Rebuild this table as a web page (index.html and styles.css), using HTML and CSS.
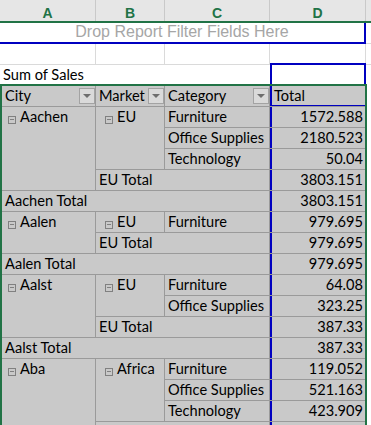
FILE: index.html
```html
<!DOCTYPE html>
<html>
<head>
<meta charset="utf-8">
<link rel="stylesheet" href="styles.css">
</head>
<body>
<div class="sheet">
  <div class="colhdr">
    <div class="ch">A</div>
    <div class="ch">B</div>
    <div class="ch">C</div>
    <div class="ch">D</div>
    <div class="ch ch-e"></div>
  </div>

  <div class="filter-row">
    <div class="filter-box">Drop Report Filter Fields Here</div>
    <div class="filter-rest"></div>
  </div>

  <div class="wrow">
    <div class="wc"></div><div class="wc"></div><div class="wc"></div><div class="wc"></div><div class="wc wc-e"></div>
  </div>

  <div class="wrow sumrow">
    <div class="wc nl sum">Sum of Sales</div><div class="wc nl"></div><div class="wc nl"></div><div class="wc"></div><div class="wc wc-e"></div>
  </div>

  <div class="selbox"></div>

  <div class="pivot">
    <div class="pc hdr">City<span class="dd"></span></div>
    <div class="pc hdr">Market<span class="dd"></span></div>
    <div class="pc hdr">Category<span class="dd"></span></div>
    <div class="pc hdr val-hdr">Total</div>

    <div class="pc rs4"><span class="tog"></span>Aachen</div>
    <div class="pc mk rs3"><span class="tog"></span>EU</div>
    <div class="pc">Furniture</div>
    <div class="pc val">1572.588</div>
    <div class="pc">Office Supplies</div>
    <div class="pc val">2180.523</div>
    <div class="pc">Technology</div>
    <div class="pc val">50.04</div>
    <div class="pc cs2">EU Total</div>
    <div class="pc val">3803.151</div>
    <div class="pc cs3">Aachen Total</div>
    <div class="pc val">3803.151</div>

    <div class="pc rs2"><span class="tog"></span>Aalen</div>
    <div class="pc mk"><span class="tog"></span>EU</div>
    <div class="pc">Furniture</div>
    <div class="pc val">979.695</div>
    <div class="pc cs2">EU Total</div>
    <div class="pc val">979.695</div>
    <div class="pc cs3">Aalen Total</div>
    <div class="pc val">979.695</div>

    <div class="pc rs3"><span class="tog"></span>Aalst</div>
    <div class="pc mk rs2"><span class="tog"></span>EU</div>
    <div class="pc">Furniture</div>
    <div class="pc val">64.08</div>
    <div class="pc">Office Supplies</div>
    <div class="pc val">323.25</div>
    <div class="pc cs2">EU Total</div>
    <div class="pc val">387.33</div>
    <div class="pc cs3">Aalst Total</div>
    <div class="pc val">387.33</div>

    <div class="pc rs4"><span class="tog"></span>Aba</div>
    <div class="pc mk rs3"><span class="tog"></span>Africa</div>
    <div class="pc">Furniture</div>
    <div class="pc val">119.052</div>
    <div class="pc">Office Supplies</div>
    <div class="pc val">521.163</div>
    <div class="pc">Technology</div>
    <div class="pc val">423.909</div>
    <div class="pc cs2"></div>
    <div class="pc val"></div>
  </div>
</div>
</body>
</html>
```

FILE: styles.css
```css
* { box-sizing: border-box; }

html, body {
  margin: 0;
  padding: 0;
  background: #ffffff;
}

body {
  width: 371px;
  height: 425px;
  overflow: hidden;
  font-family: Lato, "Noto Sans", sans-serif;
  font-size: 14.6px;
  color: #000;
}

.sheet {
  position: relative;
  width: 371px;
}

/* column header */
.colhdr {
  display: grid;
  grid-template-columns: 96px 69px 105px 96px 1fr;
  height: 23px;
  background: #e6e6e6;
  border-bottom: 2px solid #217346;
}

.ch {
  border-right: 1px solid #c9c9c9;
  display: flex;
  justify-content: center;
  align-items: center;
  padding-top: 5px;
  font-family: "Liberation Sans", Arial, sans-serif;
  font-weight: bold;
  font-size: 14px;
  color: #217346;
}

.ch-e { border-right: 0; }

/* report filter row */
.filter-row {
  display: flex;
  height: 21px;
}

.filter-box {
  width: 366px;
  height: 21px;
  border-right: 2px solid #0000c0;
  border-bottom: 2px solid #0000c0;
  text-align: center;
  font-family: "Liberation Sans", Arial, sans-serif;
  font-size: 16px;
  line-height: 18px;
  color: #a6a6a6;
}

.filter-rest {
  flex: 1;
  border-bottom: 1px solid #dadada;
}

/* plain worksheet rows */
.wrow {
  display: grid;
  grid-template-columns: 96px 69px 105px 96px 1fr;
  height: 21px;
}

.wc {
  border-right: 1px solid #dadada;
  border-bottom: 1px solid #dadada;
}

.wc-e { border-right: 0; }

.sumrow { height: 19px; }
.sumrow .wc { border-bottom: 0; }

.wc.nl { border-right-color: transparent; }

.sum {
  padding-left: 3px;
  white-space: nowrap;
  overflow: visible;
  line-height: 19px;
}

/* active selection box on D3 */
.selbox {
  position: absolute;
  left: 270px;
  top: 63px;
  width: 96px;
  height: 23px;
  border: 2px solid #0000c0;
  pointer-events: none;
}

/* pivot table */
.pivot {
  position: relative;
  width: 367px;
  border: 2px solid #217346;
  border-bottom: 0;
  display: grid;
  grid-template-columns: 93px 68px 104px 95px;
  grid-auto-rows: 20px;
  gap: 1px;
  background: #9a9a9a;
}

.pc {
  background: #c9c9c9;
  display: flex;
  align-items: flex-start;
  padding: 1px 3px 0 3px;
  line-height: 18px;
  white-space: nowrap;
  overflow: hidden;
}

.hdr {
  align-items: center;
  padding-top: 0;
  padding-right: 0;
}

.val-hdr {
  box-shadow: inset 2px 0 0 #0000c0, inset 0 -1px 0 #0000c0;
  padding-left: 4px;
}

.val {
  justify-content: flex-end;
  padding-right: 2px;
  box-shadow: inset 2px 0 0 #0000c0;
}

.rs2 { grid-row: span 2; }
.rs3 { grid-row: span 3; }
.rs4 { grid-row: span 4; }
.cs2 { grid-column: span 2; }
.cs3 { grid-column: span 3; }

.rs2, .rs3, .rs4 { padding-left: 6px; }
.mk { padding-left: 9px; }

/* collapse toggle */
.tog {
  position: relative;
  flex: none;
  width: 8px;
  height: 8px;
  margin: 8px 4px 0 0;
  border: 1px solid #808080;
}

.tog::after {
  content: "";
  position: absolute;
  left: 1px;
  right: 1px;
  top: 2px;
  height: 1px;
  background: #808080;
}

/* filter dropdown button */
.dd {
  position: relative;
  flex: none;
  margin-left: auto;
  width: 16px;
  height: 16px;
  border: 1px solid #a3a3a3;
  background: #dadada;
}

.dd::after {
  content: "";
  position: absolute;
  left: 3px;
  top: 5px;
  border-left: 4px solid transparent;
  border-right: 4px solid transparent;
  border-top: 4px solid #6e6e6e;
}
```
